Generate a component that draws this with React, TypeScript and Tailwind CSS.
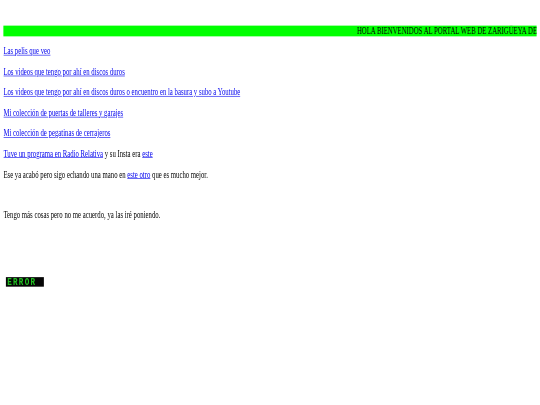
import React from "react";

const linkCls = "text-[#0000ee] underline";

export default function App() {
  return (
    <div className="w-[540px] h-[405px] overflow-hidden bg-white">
      <div className="w-[1280px] h-[680px] origin-top-left scale-x-[0.421875] scale-y-[0.596] px-2 pt-[43px] font-['Liberation_Serif',serif] text-[16px] leading-[18.4px] text-black">
        <div className="bg-[#00ff00] overflow-hidden whitespace-nowrap pl-[838px]">
          HOLA BIENVENIDOS AL PORTAL WEB DE ZARIGÜEYA DE LA SIERRA
        </div>
        <p className="mt-4">
          <a className={linkCls} href="#">Las pelis que veo</a>
        </p>
        <p className="mt-4">
          <a className={linkCls} href="#">Los videos que tengo por ahí en discos duros</a>
        </p>
        <p className="mt-4">
          <a className={linkCls} href="#">
            Los videos que tengo por ahí en discos duros o encuentro en la basura y subo a Youtube
          </a>
        </p>
        <p className="mt-4">
          <a className={linkCls} href="#">Mi colección de puertas de talleres y garajes</a>
        </p>
        <p className="mt-4">
          <a className={linkCls} href="#">Mi colección de pegatinas de cerrajeros</a>
        </p>
        <p className="mt-4">
          <a className={linkCls} href="#">Tuve un programa en Radio Relativa</a> y su Insta era{" "}
          <a className={linkCls} href="#">este</a>
        </p>
        <p className="mt-4">
          Ese ya acabó pero sigo echando una mano en{" "}
          <a className={linkCls} href="#">este otro</a> que es mucho mejor.
        </p>
        <p className="mt-[50px]">Tengo más cosas pero no me acuerdo, ya las iré poniendo.</p>
        <div className="mt-[94px] ml-[6px] w-[90px] h-[16px] bg-[#050505] flex items-center pl-[3px]">
          <span className="font-['Liberation_Mono',monospace] font-bold text-[18px] leading-[16px] tracking-[3px] text-[#22c022]">
            ERROR
          </span>
        </div>
      </div>
    </div>
  );
}
